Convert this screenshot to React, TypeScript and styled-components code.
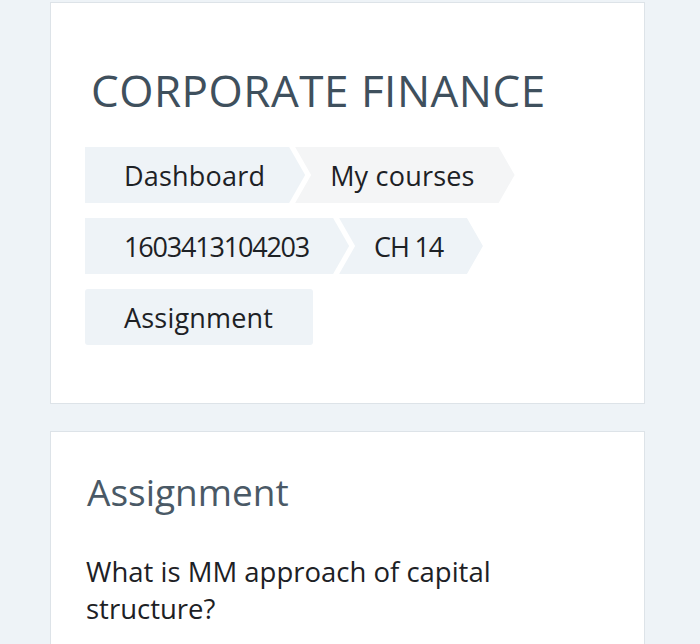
import { createGlobalStyle } from "styled-components";
import styled from "styled-components";

const GlobalStyle = createGlobalStyle`
  html, body {
    margin: 0;
    padding: 0;
    background: #eef3f7;
    font-family: "Open Sans", "Liberation Sans", sans-serif;
  }
`;

const Page = styled.div`
  width: 700px;
  height: 644px;
  overflow: hidden;
  padding: 2px 55px 0 50px;
  box-sizing: border-box;
  display: flex;
  flex-direction: column;
  gap: 27px;
`;

const Card = styled.section`
  background: #ffffff;
  border: 1px solid #dde3e8;
  box-sizing: border-box;
  padding: 36px 34px 58px 34px;
`;

const Title = styled.h1`
  margin: 23px 0 29px 6px;
  font-size: 44px;
  line-height: 56px;
  font-weight: 400;
  color: #3f505d;
  letter-spacing: 0.5px;
`;

const Crumbs = styled.ol`
  list-style: none;
  margin: 0;
  padding: 0;
  display: flex;
  flex-wrap: wrap;
  row-gap: 15px;
`;

const Row = styled.div`
  display: flex;
  width: 100%;
`;

interface crumbProps {
  $notch?: boolean;
  $arrow?: boolean;
  $grey?: boolean;
  $tight?: boolean;
}

const Crumb = styled.li<crumbProps>`
  height: 56px;
  display: flex;
  align-items: center;
  padding: 0 40px 0 ${(p) => (p.$notch ? "35px" : "39px")};
  margin-left: ${(p) => (p.$notch ? "-10px" : "0")};
  background: ${(p) => (p.$grey ? "#f4f5f6" : "#eef3f7")};
  color: #1d2125;
  font-size: 27px;
  letter-spacing: ${(p) => (p.$tight ? "-1.2px" : "0.2px")};
  border-radius: ${(p) => (p.$notch || p.$arrow ? "0" : "3px")};
  clip-path: ${(p) =>
    p.$arrow
      ? p.$notch
        ? "polygon(0 0, calc(100% - 16px) 0, 100% 50%, calc(100% - 16px) 100%, 0 100%, 16px 50%)"
        : "polygon(0 0, calc(100% - 16px) 0, 100% 50%, calc(100% - 16px) 100%, 0 100%)"
      : "none"};
  white-space: nowrap;
`;

const Heading = styled.h2`
  margin: 0 0 0 2px;
  font-size: 37px;
  line-height: 48px;
  font-weight: 400;
  color: #4a5966;
`;

const Question = styled.p`
  margin: 37px 0 0 1px;
  font-size: 27.5px;
  line-height: 37px;
  color: #1d2125;
  max-width: 450px;
`;

export default function App() {
  return (
    <>
      <GlobalStyle />
      <Page>
        <Card>
          <Title>CORPORATE FINANCE</Title>
          <Crumbs>
            <Row>
              <Crumb $arrow>Dashboard</Crumb>
              <Crumb $notch $arrow $grey>
                My courses
              </Crumb>
            </Row>
            <Row>
              <Crumb $arrow $tight>
                1603413104203
              </Crumb>
              <Crumb $notch $arrow $tight>
                CH 14
              </Crumb>
            </Row>
            <Row>
              <Crumb>Assignment</Crumb>
            </Row>
          </Crumbs>
        </Card>
        <Card>
          <Heading>Assignment</Heading>
          <Question>What is MM approach of capital structure?</Question>
        </Card>
      </Page>
    </>
  );
}
